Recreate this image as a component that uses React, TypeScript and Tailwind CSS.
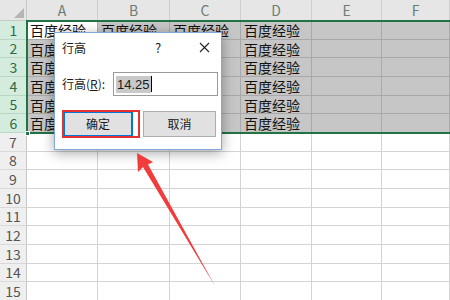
import React from "react";

const letters = ["A", "B", "C", "D", "E", "F"];
const rows = Array.from({ length: 15 }, (_, i) => i + 1);

const Cell = ({ row, col }: { row: number; col: number }) => {
  const selected = row <= 6;
  const active = row === 1 && col === 0;
  // B2:C6 sit fully under the dialog, so their text never shows
  const hidden = row >= 2 && (col === 1 || col === 2);
  const hasText = row <= 6 && col <= 3 && !hidden;
  let cls = "border-r border-b border-[#d4d4d4] bg-white";
  if (selected && !active) cls = "border-r border-b border-[#a9a9a9] bg-[#c6c6c6]";
  if (active) cls = "border-r border-b border-[#a9a9a9] bg-white";
  return (
    <div className={`${cls} overflow-hidden whitespace-nowrap pl-[3px] text-[14px] leading-[18px] text-[#111]`}>
      {hasText ? "百度经验" : ""}
    </div>
  );
};

const Sheet = () => {
  return (
    <div className="grid grid-cols-[27px_71px_72px_71px_71px_70px_1fr] grid-rows-[21px_repeat(15,18.67px)] font-['Noto_Sans_CJK_SC',sans-serif]">
      {/* corner */}
      <div className="relative bg-[#e6e6e6] border-r border-b border-[#c8c8c8]">
        <svg className="absolute right-[2px] bottom-[2px]" width="10" height="10" viewBox="0 0 10 10">
          <polygon points="10,0 10,10 0,10" fill="#b5b5b5" />
        </svg>
      </div>
      {letters.map((l) => (
        <div
          key={l}
          className="flex items-center justify-center bg-[#e6e6e6] border-r border-[#cfcfcf] text-[14px] text-[#6d7d74]"
        >
          {l}
        </div>
      ))}
      {rows.map((r) => (
        <React.Fragment key={r}>
          <div
            className={
              r <= 6
                ? "flex items-center justify-center bg-[#d3ecdd] border-b border-[#b9d7c4] text-[14px] leading-none text-[#2e6b45]"
                : "flex items-center justify-center bg-[#efefef] border-b border-[#d9d9d9] border-r border-r-[#c8c8c8] text-[14px] leading-none text-[#555]"
            }
          >
            {r}
          </div>
          {letters.map((_, c) => (
            <Cell key={c} row={r} col={c} />
          ))}
        </React.Fragment>
      ))}
    </div>
  );
};

const Dialog = () => {
  return (
    <div className="absolute left-[54px] top-[32px] w-[168px] h-[118px] bg-white border border-[#7ea9d9] shadow-[0_3px_12px_rgba(0,0,0,0.35)] font-['Noto_Sans_CJK_SC',sans-serif] text-[12px] text-[#1a1a1a]">
      <div className="flex items-center h-[29px] pl-[7px]">
        <span className="w-[93px]">行高</span>
        <span className="w-[44px] text-[13px]">?</span>
        <svg width="11" height="11" viewBox="0 0 11 11">
          <path d="M1 1L10 10M10 1L1 10" stroke="#222" strokeWidth="1.1" />
        </svg>
      </div>
      <div className="flex items-center mt-[10px] pl-[7px]">
        <span className="w-[51px]">
          行高(<span className="underline">R</span>):
        </span>
        <div className="flex items-center w-[105px] h-[24px] border border-[#9a9a9a] pl-[2px]">
          <span className="bg-[#c9c9c9] px-[1px] text-[13px] leading-[17px] font-['Liberation_Sans',sans-serif]">14.25</span>
          <span className="w-px h-[16px] bg-black" />
        </div>
      </div>
      <div className="flex mt-[15px] pl-[8px] gap-[10px]">
        <div className="relative">
          <button className="w-[70px] h-[26px] bg-[#e1e1e1] border-2 border-[#0078d7] text-[12px]">确定</button>
          <div className="absolute left-[-1px] top-[-1px] w-[78px] h-[28px] border-2 border-[#e8322f]" />
        </div>
        <button className="w-[73px] h-[26px] bg-[#e1e1e1] border border-[#adadad] text-[12px]">取消</button>
      </div>
    </div>
  );
};

export default function App() {
  return (
    <div className="relative w-[450px] h-[300px] overflow-hidden bg-white">
      <Sheet />
      {/* selection outline */}
      <div className="absolute left-[26px] top-[20px] w-[440px] h-[114px] border-2 border-[#217346]" />
      <div className="absolute left-[25px] top-[131px] w-[5px] h-[5px] bg-[#217346] border border-white" />
      <Dialog />
      <svg className="absolute left-0 top-0 pointer-events-none" width="450" height="300" viewBox="0 0 450 300">
        <polygon
          points="137,153 153,162 148,164.5 215,286 143,167 138,172"
          fill="#f23b3b"
        />
      </svg>
    </div>
  );
}
